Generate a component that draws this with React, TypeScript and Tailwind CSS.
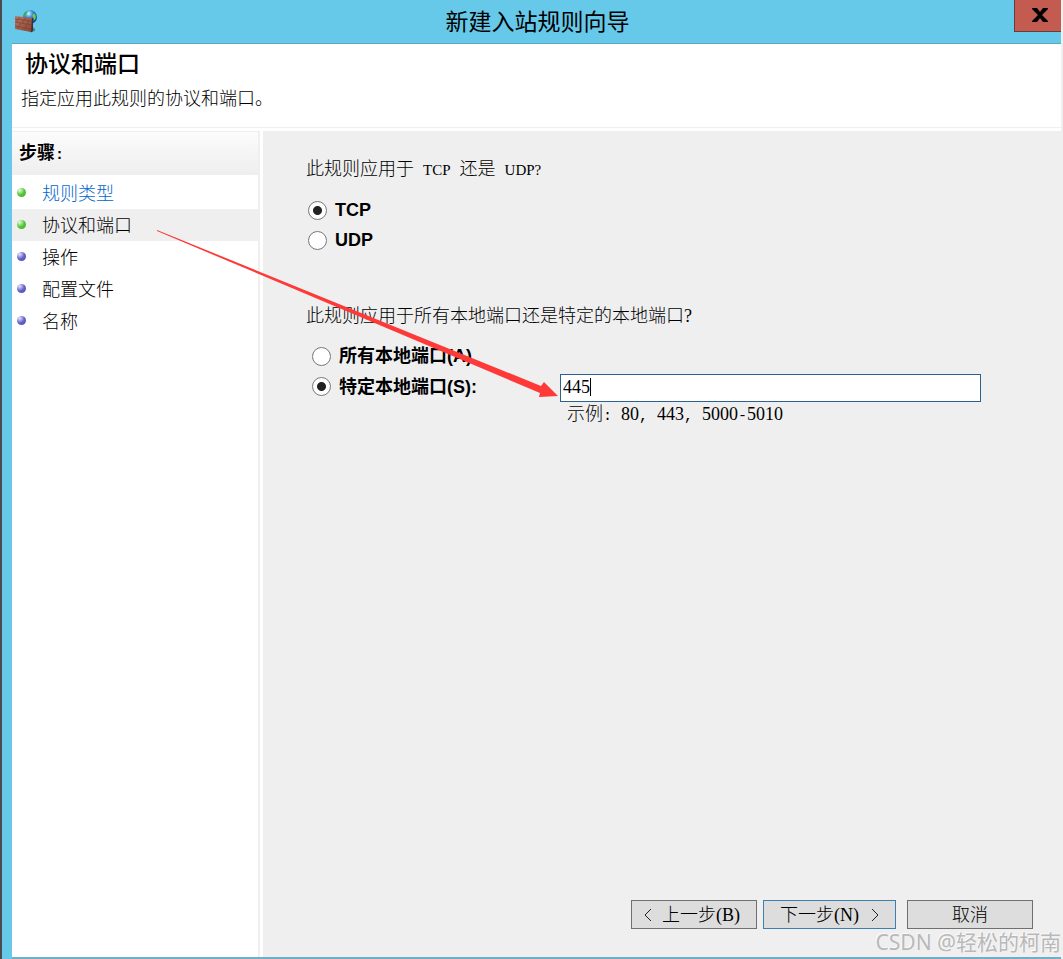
import type { ReactNode } from "react";

const steps = [
  { label: "规则类型", done: true, link: true },
  { label: "协议和端口", done: true, current: true },
  { label: "操作" },
  { label: "配置文件" },
  { label: "名称" },
];

function Mono({ children }: { children: ReactNode }) {
  return (
    <span className="whitespace-pre font-['Liberation_Mono',monospace] text-[15px]">
      {children}
    </span>
  );
}

function Serif({ children }: { children: ReactNode }) {
  return <span className="font-['Liberation_Serif',serif]">{children}</span>;
}

function FirewallIcon() {
  return (
    <svg width="24" height="24" viewBox="0 0 24 24" aria-hidden="true">
      <defs>
        <radialGradient id="globe" cx="0.4" cy="0.25" r="0.8">
          <stop offset="0" stopColor="#d4f8fa" />
          <stop offset="0.35" stopColor="#3a94dc" />
          <stop offset="1" stopColor="#0f2f94" />
        </radialGradient>
        <linearGradient id="wall" x1="0" y1="0" x2="1" y2="1">
          <stop offset="0" stopColor="#bb7660" />
          <stop offset="1" stopColor="#8a4534" />
        </linearGradient>
      </defs>
      <path d="M18 18Q22 19 21 22L18 23Z" fill="#3f8ba3" />
      <circle cx="16" cy="8" r="7" fill="url(#globe)" />
      <path d="M9.5 6Q11 2.5 14 1.5L13 4L11.5 6L10 8Z" fill="#3fae4a" />
      <path d="M19 5L21 5L22 8L21 10.5L20 11L19.5 9L18.5 7Z" fill="#6ccc3c" />
      <path d="M17 9L19 9L19 22L17 23.5L16 22Z" fill="#4b2b27" />
      <path d="M1 7L18 9L17 23L1 20Z" fill="url(#wall)" />
      <path
        d="M1 10L18 12M1 13L18 16M1 17L17 20M5 8V10M11 9V11M3 10V13M9 11V14M14 12V15M6 14V17M12 15V19M4 17V20M10 19V21"
        stroke="#74402f"
        strokeWidth="0.6"
        fill="none"
      />
    </svg>
  );
}

function Chevron({ d }: { d: string }) {
  return (
    <svg className="inline-block" width="8" height="14" viewBox="0 0 8 14" aria-hidden="true">
      <path d={d} fill="none" stroke="#222" strokeWidth="1" />
    </svg>
  );
}

function Radio({ name, label, checked }: { name: string; label: string; checked?: boolean }) {
  return (
    <label className="flex items-center gap-2 font-['Liberation_Sans','Noto_Sans_CJK_SC',sans-serif] font-bold leading-[30px]">
      <input
        type="radio"
        name={name}
        defaultChecked={checked}
        className="size-[19px] shrink-0 appearance-none rounded-full border border-[#777] bg-white checked:bg-[radial-gradient(circle,#222_4px,#fff_5px)]"
      />
      {label}
    </label>
  );
}

function Sidebar() {
  return (
    <nav className="w-[248px] shrink-0 border-t border-r-2 border-[#efefef] bg-white">
      <h2 className="h-[43px] bg-linear-to-b from-[#fcfcfc] to-[#eeeeee] pl-[7px] font-bold leading-[38px]">
        步骤<Mono>:</Mono>
      </h2>
      <ul className="pt-0.5">
        {steps.map((step) => (
          <li
            key={step.label}
            className={`flex h-8 items-center gap-4 pb-0.5 pl-[5px] ${step.current ? "bg-[#efefef]" : ""}`}
          >
            <span
              className={`size-[9px] rounded-full ${
                step.done
                  ? "bg-[radial-gradient(circle_at_30%_25%,#e6fadf,#55c63a_50%,#3da828)]"
                  : "bg-[radial-gradient(circle_at_30%_25%,#e4e4fa,#6462c8_50%,#4a48a8)]"
              }`}
            />
            {step.link ? (
              <a href="#type" className="text-[#0066cc]">
                {step.label}
              </a>
            ) : (
              <span>{step.label}</span>
            )}
          </li>
        ))}
      </ul>
    </nav>
  );
}

export default function App() {
  return (
    <div className="relative flex min-h-screen flex-col border-r-2 border-l-2 border-r-[#efefef] border-l-[#4b4b4f] bg-[#66c9ea] font-['Noto_Sans_CJK_SC',sans-serif] text-[18px] font-light text-black">
      <header className="flex h-[43px] items-start">
        <div className="w-[47px] pt-[9px] pl-3">
          <FirewallIcon />
        </div>
        <h1 className="flex-1 pl-3 text-center text-[23px] font-normal leading-[41px]">
          新建入站规则向导
        </h1>
        <button
          aria-label="关闭"
          className="flex h-8 w-[47px] items-center justify-center border-b border-l border-[#6b3b3b] bg-[#c35b50] pb-0.5 pl-1"
        >
          <svg width="16" height="14" viewBox="0 0 16 14" aria-hidden="true">
            <path d="M0 0H5L8 4L11 0H16V1L10 7L16 13V14H11L8 10L5 14H0V13L6 7L0 1Z" fill="#000" />
          </svg>
        </button>
      </header>

      <main className="ml-2.5 flex flex-1 flex-col border-t border-b-2 border-t-[#5ba7c1] border-b-[#72adc6] bg-white">
        <section className="mb-[3px] h-[84px] border-b border-[#efefef] pt-0.5">
          <h2 className="pl-[13px] text-[23px] font-medium leading-[32px]">协议和端口</h2>
          <p className="pl-[9px] leading-[38px]">指定应用此规则的协议和端口。</p>
        </section>

        <div className="flex flex-1">
          <Sidebar />
          <form
            className="ml-[3px] flex flex-1 flex-col bg-[#efefef] pt-[18px] pr-7 pb-7 pl-[43px]"
            onSubmit={(e) => e.preventDefault()}
          >
            <fieldset>
              <legend className="leading-[36px]">
                此规则应用于<Mono> </Mono>
                <span className="font-['Liberation_Serif',serif] text-[15px]">TCP</span>
                <Mono> </Mono>还是<Mono> </Mono>
                <span className="font-['Liberation_Serif',serif] text-[15px]">UDP?</span>
              </legend>
              <div className="pt-[5px] pl-0.5">
                <Radio name="protocol" label="TCP" checked />
                <Radio name="protocol" label="UDP" />
              </div>
            </fieldset>

            <fieldset className="mt-[41px]">
              <legend className="leading-[36px]">
                此规则应用于所有本地端口还是特定的本地端口<Serif>?</Serif>
              </legend>
              <div className="grid grid-cols-[248px_1fr] pt-[7px] pl-1.5">
                <div className="col-span-2">
                  <Radio name="ports" label="所有本地端口(A)" />
                </div>
                <Radio name="ports" label="特定本地端口(S):" checked />
                <div className="mt-[3px] mr-[52px] flex h-7 items-center border border-[#2d628f] bg-white pb-0.5">
                  <input
                    aria-label="特定本地端口"
                    defaultValue="445"
                    size={3}
                    className="w-[29px] pl-0.5 font-['Liberation_Serif',serif] font-normal outline-none"
                  />
                  <span className="h-[18px] w-px bg-black" />
                </div>
                <p className="col-start-2 pl-[7px] leading-[20px]">
                  示例<Mono>: </Mono>
                  <Serif>80</Serif>
                  <Mono>, </Mono>
                  <Serif>443</Serif>
                  <Mono>, </Mono>
                  <Serif>5000</Serif>
                  <Mono>-</Mono>
                  <Serif>5010</Serif>
                </p>
              </div>
            </fieldset>

            <div className="mt-auto flex justify-end">
              <button className="flex h-[29px] w-[126px] items-center justify-center gap-2.5 border border-[#707070] bg-[#dddddd] pr-1 leading-[26px]">
                <Chevron d="M7 1L1 7L7 13" />
                <span className="pb-0.5">
                  上一步<Serif>(B)</Serif>
                </span>
              </button>
              <button className="ml-1.5 flex h-[29px] w-[133px] items-center justify-center gap-3 border border-[#3c7fb1] bg-[#dddddd] leading-[26px]">
                <span className="pb-0.5">
                  下一步<Serif>(N)</Serif>
                </span>
                <Chevron d="M1 1L7 7L1 13" />
              </button>
              <button className="ml-[11px] h-[29px] w-[126px] border border-[#707070] bg-[#dddddd] pb-0.5 leading-[25px]">
                取消
              </button>
            </div>
          </form>
        </div>
      </main>

      <svg
        className="pointer-events-none absolute top-[230px] left-[154px]"
        width="406"
        height="170"
        viewBox="156 230 406 170"
        aria-hidden="true"
      >
        <path d="M157 230L541 386L544 382L558 396L539 397L540 393L157 231Z" fill="#fd3a38" />
      </svg>
      <p className="absolute right-0 bottom-1 font-['Noto_Sans','Noto_Sans_CJK_SC',sans-serif] text-[21px] font-normal leading-[26px] text-[#b9b9b9] text-shadow-[-1px_-1px_0_#fafafa]">
        CSDN @轻松的柯南
      </p>
    </div>
  );
}
